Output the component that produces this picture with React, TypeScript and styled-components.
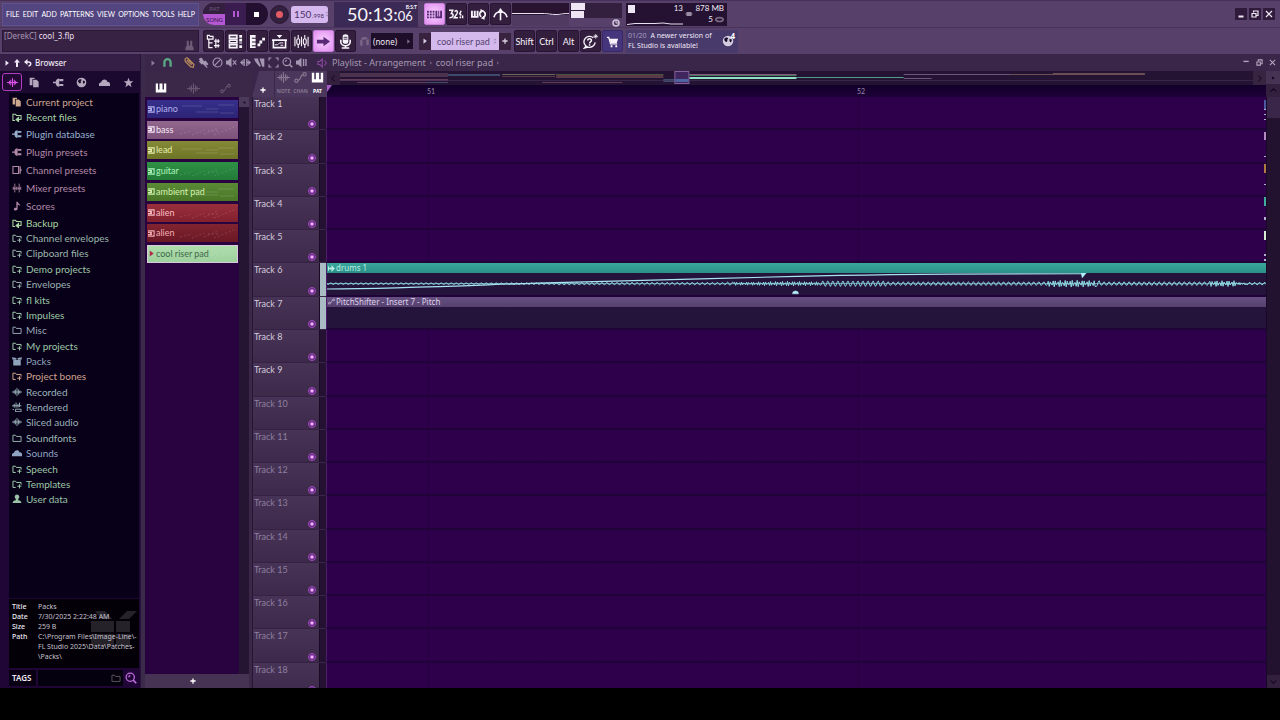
import React from "react";
import styled, { createGlobalStyle, css } from "styled-components";

const narrow = `Lato, "Noto Sans", sans-serif`;
const sans = `"Noto Sans", "Open Sans", sans-serif`;

const Global = createGlobalStyle`
  * { box-sizing: border-box; }
  html, body { margin: 0; background: #000; }
  body { font-family: ${sans}; font-size: 9px; color: #d9cfe2; overflow: hidden; }
  button, input, select { font: inherit; color: inherit; border: 0; padding: 0; margin: 0; background: none; appearance: none; outline: 0; }
  svg { display: block; flex: none; }
  h1, h2, p, dl, dd, dt, ul { margin: 0; padding: 0; font-weight: 400; }
`;

/* ---------- icons ---------- */

const s = { fill: "none", stroke: "currentColor" } as const;
const f = { fill: "currentColor" } as const;

const glyphs: Record<string, React.ReactNode> = {
  tree: (
    <g {...s} strokeWidth="1.300">
      <path d="M1.500 1.500h2l1 1h3v3h-6z M3 6v8.500h4 M3 9.500h4 M10.500 5v6 M8.500 7.500h6 M10.500 11v4 M8.500 12.500h6" />
      <path d="M13 5.500v4 M13 11v3.500" />
    </g>
  ),
  rack: (
    <g {...s}>
      <path d="M1.500 1.500h8v3h-8z M1.500 6.500h8v3h-8z M1.500 11.500h8v3h-8z" strokeWidth="1.700" />
      <path d="M13.500 1v9 M13.500 12v3" strokeWidth="3" strokeDasharray="3 1" />
    </g>
  ),
  roll: (
    <g {...f}>
      <path d="M0 1h6v3H2v1h4v3H2v1h4v3H2v1h4v2H0z M8 10h3v3H8z M10 7h3v3h-3z M13 4h3v3h-3z" />
    </g>
  ),
  playlist: (
    <g {...s}>
      <path d="M1.500 6.500h13v8h-13z M0 6.500h16" strokeWidth="1.700" />
      <path d="M3 11.500h3l2-2h4 M9 12h3" />
      <path d="M5 1h6l-3 3.500z" fill="currentColor" stroke="none" />
    </g>
  ),
  mixer: (
    <g {...s} strokeWidth="1.200">
      <path d="M4.500 1v4 M4.500 11v4 M11.500 1v4 M11.500 11v4" />
      <path d="M3 6.500a1.500 1.500 0 0 1 3 0v3a1.500 1.500 0 0 1-3 0z M10 6.500a1.500 1.500 0 0 1 3 0v3a1.500 1.500 0 0 1-3 0z M1 3v10 M8 3v10 M15 3v10" />
    </g>
  ),
  faders: (
    <g {...s} strokeWidth="1.400">
      <path d="M4.500 1v14 M11.500 1v14 M2 6v5 M7 6v5 M9.500 6v5 M14 6v5 M2 8.500h5 M9.500 8.500h4.500" />
    </g>
  ),
  arrow: <path {...f} d="M1 6h7V3l7 5-7 5v-3H1z" />,
  mic: (
    <g>
      <path {...f} d="M5 2a3 1.800 0 0 1 6 0v6a3 2.500 0 0 1-6 0z" />
      <path {...s} d="M3 6v2.500a5 4 0 0 0 10 0V6 M8 12.500V15 M4 15h8" strokeWidth="1.700" />
      <path stroke="#3a2548" d="M6 3.500h4 M6 5.500h4" />
    </g>
  ),
  magnet: <path {...s} strokeWidth="3.400" d="M3.500 14V7.500a4.500 4.500 0 0 1 9 0V14" />,
  magnetDots: <path {...s} strokeWidth="3.400" strokeDasharray="8 1" d="M3.500 14V7.500a4.500 4.500 0 0 1 9 0V14" />,
  typing: (
    <g {...f}>
      <path d="M0 4h2v2H0z M3 4h2v2H3z M6 4h2v2H6z M0 7h2v2H0z M3 7h2v2H3z M6 7h2v2H6z M0 10h2v2H0z M3 10h2v2H3z M6 10h2v2H6z M9 4h2v6h1V4h1v6h1V4h2v8H9z" />
    </g>
  ),
  count: (
    <g {...s} strokeWidth="1.600">
      <path d="M0 3.500h4L2.500 7c3 0 2.500 4.500-2 4.500 M6 5c1.500-2.500 4-.5 2.500 2L5.500 11.500h4 M13 4l-1.500 3 1.500 2 M12 10v2 M14.500 9v3" />
    </g>
  ),
  loop: (
    <g {...s} strokeWidth="2">
      <path d="M1 4v6.500h6V4 M4 4v6" />
      <path d="M11 4.500a3.500 3.500 0 0 0 0 6 M13 11a3.500 3.500 0 0 0 0-6.500" strokeWidth="1.800" />
      <path d="M10 2l4 2-3.500 2.500z M14.500 9v4.500L10.500 12z" fill="currentColor" stroke="none" />
    </g>
  ),
  scatter: (
    <g {...s} strokeWidth="1.700">
      <path d="M8 3v11 M1 11c1-4 4-6 7-6s6 2 7 6" />
      <path d="M8 1l3.500 5h-7z" fill="currentColor" stroke="none" />
    </g>
  ),
  help: (
    <g {...s} strokeWidth="1.400">
      <path d="M11 4A6 5.800 0 1 0 13 9 M3.500 12.500L1.500 15l4-1" />
      <path d="M5 7c0-2.500 4-2.500 4 0 0 1.500-2 1.500-2 3 M7 11v1.500" strokeWidth="1.600" />
      <path d="M13.500 0v5 M11 2.500h5 M12 1l3 3 M15 1l-3 3" strokeWidth=".8" />
    </g>
  ),
  cart: (
    <g>
      <path {...s} strokeWidth="1.400" d="M2 3.500h2l2 7h7" />
      <path {...f} d="M5 5h9l-1.500 4.500H6z M6 12h2v2H6z M11 12h2v2h-2z" />
    </g>
  ),
  globe: (
    <g>
      <circle cx="8" cy="8" r="7" fill="currentColor" />
      <path fill="#1a0c2b" d="M3 5c2-2 4-2 5-1s-2 2-1 3-1 3-2 2-2-1-2-4z M10 5l3 1v2l-2 2-1-2z" />
    </g>
  ),
  wave: <path {...s} strokeWidth="1.400" d="M0 8h16 M3.500 5.500v5 M5.500 4v8 M8 1.500v13 M10.500 4v8 M12.500 5.500v5" />,
  docs: (
    <g {...f}>
      <path d="M1 1h7v2H5v9H1z" />
      <path d="M6 4h5l3 3v8H6z" />
    </g>
  ),
  plug: (
    <g {...f}>
      <path d="M0 7h4c0-3 2-5 5-5v12c-3 0-5-2-5-5H0z" />
      <path d="M9 3h6v3H9z M9 10h6v3H9z" />
    </g>
  ),
  cloud: <path {...f} d="M0 13c-1-3 1-5 3-5 1-5 8-6 9-1 3-1 5 3 4 6z" />,
  star: <path {...f} d="M8 1l2 5h5l-4 3.500 1.500 5.500L8 11.500 3.500 15 5 9.500 1 6h5z" />,
  folder: <path {...s} strokeWidth="1.500" d="M1.500 3.500h4l1.500 2h7.500v8h-13z" />,
  folderMark: (
    <g {...s} strokeWidth="1.600">
      <path d="M6 13.500H1.500v-10h4l1.500 2h7.500V9" />
      <path d="M8.500 11.500H15 M12 8.500V15" />
    </g>
  ),
  folderBack: (
    <g {...s} strokeWidth="1.700">
      <path d="M5 13.500H1.500v-10h4l1.500 2h7.500V12H9" />
      <path d="M10.500 8.500v7L6.500 12z" fill="currentColor" />
    </g>
  ),
  channel: (
    <g>
      <path {...s} strokeWidth="1.700" d="M1.500 2.500h9v11h-9z" />
      <path {...f} d="M12 2h2v4l2 2-2 2v4h-2z" />
    </g>
  ),
  note: <path {...f} d="M7 1h2c0 3 5 3 4 7-1-2-3-2-4-2v6c0 4-6 4-6 1 0-2 2-3 4-2z" />,
  box: <path {...f} d="M0 2l7 1v3H1z M16 2L9 3v3h6z M2 6.500h12V15H2z" />,
  rendered: (
    <g {...s} strokeWidth="1.500">
      <path d="M0 6h15 M3.500 3v6 M6.500 1v8 M9.500 3v6 M12 1v7 M5.500 11.500h9v4h-9z M1 12h2" />
    </g>
  ),
  user: <path {...f} d="M8 1a3.500 3.500 0 0 1 2 6.500V10c3 0 5 2 5 4.500H1C1 12 3 10 6 10V7.500A3.500 3.500 0 0 1 8 1z" />,
  piano: <path {...f} d="M1 2h3v8h2V2h4v8h2V2h3v12H1z" />,
  env: (
    <g {...s} strokeWidth="1.500">
      <circle cx="3" cy="12" r="2" />
      <circle cx="13" cy="4" r="2" />
      <path d="M5 11.500c4 0 2-6 6-7" />
    </g>
  ),
  pencil: (
    <g {...s} strokeWidth="1.800">
      <path d="M1.500 4c0-3 3-3.500 5-1l8 8-1 4-4-1-7-7c-1-1-1-2-1-3z M4 4.500l7 7 M5.500 3l7 7" />
    </g>
  ),
  brush: <path {...f} d="M2 2c3-2 5 0 5 2l2 2 2-1 4 5-1 2-3-1 3 4-1 1-6-6-2 1-4-5 2-1-2-2z" />,
  ban: (
    <g {...s} strokeWidth="1.700">
      <circle cx="8" cy="8" r="6.500" />
      <path d="M3.500 12.500l9-9" />
    </g>
  ),
  mute: (
    <g>
      <path {...f} d="M0 5h3l5-4v14l-5-4H0z" />
      <path {...s} strokeWidth="1.600" d="M10 5l5 6 M15 5l-5 6" />
    </g>
  ),
  slip: (
    <g {...f}>
      <path d="M0 8l4-4v3h1V3h2v10H5V9H4v3z M16 8l-4-4v3h-1V3H9v10h2V9h1v3z" />
    </g>
  ),
  slice: <path {...f} d="M0 2h6v2l4 9-2 1-6-7z M8 2h7v12h-3z" />,
  select: <path {...s} strokeWidth="1.700" d="M1.500 5V1.500H5 M11 1.500h3.500V5 M14.500 11v3.500H11 M5 14.500H1.500V11" />,
  zoom: (
    <g {...s} strokeWidth="1.700">
      <circle cx="7" cy="7" r="5.500" />
      <path d="M5 7a2 2 0 0 1 2-2" />
      <path d="M11 11l4 4" strokeWidth="2.300" />
    </g>
  ),
  speaker: (
    <g>
      <path {...f} d="M0 5h3l5-4v14l-5-4H0z" />
      <path {...s} strokeWidth="2" d="M11 3v10 M14.500 3v10" />
    </g>
  ),
  monitor: (
    <g {...s} strokeWidth="1.700">
      <path d="M1.500 5.500h3l4-4v13l-4-4h-3z" />
      <path d="M12 4l3 4-3 4" />
    </g>
  ),
  right: <path {...f} d="M4 1l9 7-9 7z" />,
  up: <path {...f} d="M8 0l6 7h-4v9H6V7H2z" />,
  undo: (
    <g>
      <path {...f} d="M0 6l7-6v12z" />
      <path {...s} strokeWidth="3" d="M6 6h3c6 0 6 7 0 8" />
    </g>
  ),
  plus: <path {...s} strokeWidth="3.500" d="M8 1v14 M1 8h14" />,
  min: <path {...f} d="M3 11h10v4H3z" />,
  restore: (
    <g {...s} strokeWidth="2.400">
      <path d="M2 7h8v7H2z M5 5V2h9v9h-3" />
    </g>
  ),
  close: <path {...s} strokeWidth="2.400" d="M2 2l12 12 M14 2L2 14" />,
  minThin: <path {...f} d="M1 4h12v3H1z" />,
  chevL: <path {...s} strokeWidth="1.800" d="M10 3L5 8l5 5" />,
  chevR: <path {...s} strokeWidth="1.800" d="M6 3l5 5-5 5" />,
  chevU: <path {...s} strokeWidth="1.800" d="M3 10l5-5 5 5" />,
  chevD: <path {...s} strokeWidth="1.800" d="M3 6l5 5 5-5" />,
  dot: <path {...f} d="M5 5h6v6H5z" />,
  clip: (
    <g>
      <path {...s} strokeWidth="2.400" d="M0 2h14v12H0" />
      <path {...f} d="M0 4h9v3H0z M0 9h9v3H0z M5 7h4v2H5z" />
    </g>
  ),
  clock: (
    <g>
      <circle cx="8" cy="8" r="6" {...s} strokeWidth="3" />
      <path {...s} strokeWidth="2" d="M8 3v5h5" />
    </g>
  ),
  ellipse: <ellipse cx="8" cy="8" rx="6.500" ry="3.500" {...s} strokeWidth="3" />,
  chip: <path {...f} d="M3 4h10v8H3z M1 6h14v1H1z M1 9h14v1H1z" />,
  stamp: <path {...f} d="M4 1h3v7h2V1h3v8h1l1 3v3H2v-3l1-3h1z" />,
  clipWave: <path {...s} strokeWidth="2.400" d="M1 3v10 M1 8h14 M5 5v6 M9 3v10l5-5z" />,
  spin: <path {...f} d="M8 1l4 5H4z M8 15l4-5H4z" />,
};

const Icon = ({ name, size = 12, color }: { name: string; size?: number; color?: string }) => (
  <svg width={size} height={size} viewBox="0 0 16 16" color={color} aria-hidden="true">
    {glyphs[name]}
  </svg>
);

/* ---------- frame ---------- */

const Frame = styled.div`
  display: flex;
  flex-direction: column;
  height: 100vh;
  padding-bottom: 32px;
`;
const Header = styled.header`
  flex: none;
  background: #57416a;
  border-top: 1px solid #45305a;
`;
const Bar = styled.div`
  display: flex;
  align-items: center;
  height: 27px;
  padding: 0 5px 0 2px;
  border-bottom: 1px solid #48335a;
  &:last-child { height: 26px; border-bottom: 0; }
`;
const Menu = styled.nav`
  display: flex;
  justify-content: space-between;
  align-items: center;
  width: 197px;
  height: 23px;
  padding: 0 3px;
  margin-right: 4px;
  background: #534580;
  border: 1px solid #5f5090;
  font: 7px ${narrow};
  color: #fff;
`;
const Hint = styled.div`
  display: flex;
  justify-content: space-between;
  align-items: flex-start;
  width: 197px;
  height: 22px;
  padding: 0 3px 0 1px;
  margin-right: 4px;
  background: #382243;
  border: 1px solid #2b1836;
  font-size: 8px;
  line-height: 10px;
  color: #e8dff0;
  span { color: #a596b2; }
  svg { align-self: flex-end; }
`;
const Transport = styled.div`
  display: flex;
  align-items: center;
  width: 65px;
  height: 22px;
  overflow: hidden;
  border-radius: 11px;
  background: #251231;
`;
const Mode = styled.div`
  width: 22px;
  flex: none;
  display: flex;
  flex-direction: column;
  align-self: stretch;
`;
const ModeButton = styled.button<{ $on?: boolean }>`
  flex: 1;
  padding-left: 1px;
  font: 6px/10px ${narrow};
  color: ${(p) => (p.$on ? "#2c1040" : "#6a557b")};
  background: ${(p) => (p.$on ? "#b558d4" : "#33203f")};
`;
const TransportButton = styled.button<{ $lit?: boolean }>`
  display: grid;
  place-items: center;
  width: 21px;
  height: 22px;
  background: ${(p) => (p.$lit ? "#3b1c50" : "#231030")};
`;
const Record = styled.button`
  display: grid;
  place-items: center;
  width: 19px;
  height: 19px;
  margin: 0 2px;
  border-radius: 50%;
  background: #33203f;
  border: 1px solid #2a1636;
`;
const Tempo = styled.label`
  display: flex;
  align-items: center;
  width: 37px;
  height: 17px;
  padding: 0 1px 0 3px;
  border-radius: 3px;
  background: #d5b8ee;
  color: #4b3168;
  font: 10px ${narrow};
  input { width: 18px; }
  small { flex: 1; font-size: 6px; padding-top: 3px; }
`;
const Clock = styled.div`
  position: relative;
  display: flex;
  align-items: baseline;
  width: 84px;
  height: 25px;
  padding-left: 13px;
  margin: 0 6px;
  background: #3b2a55;
  color: #f8f5fc;
  font: 18px/24px ${narrow};
  span { font-size: 13px; }
  small { position: absolute; right: 1px; top: 1px; font: 700 5px/8px ${narrow}; }
`;
const Tool = styled.button<{ $on?: boolean; $shop?: boolean }>`
  display: grid;
  place-items: center;
  flex: none;
  width: 21px;
  height: 22px;
  margin-right: 1px;
  color: #f8f4fb;
  background: ${(p) => (p.$shop ? "#44357c" : "#341e3e")};
  border: 1px solid ${(p) => (p.$shop ? "#372968" : "#281432")};
  border-radius: 2px;
  font: 9px ${narrow};
  ${(p) => p.$on && css`
    background: radial-gradient(#fad4ff, #e08df0);
    border-color: #c880dc;
    color: #5a2a78;
  `}
`;
const Scope = styled.div`
  width: 57px;
  height: 23px;
  background: #281431;
  margin-right: 1px;
`;
const Meter = styled.div`
  position: relative;
  width: 52px;
  height: 23px;
  margin-right: 4px;
  background: linear-gradient(#33203f 0 15px, #57416a 15px);
  svg { position: absolute; right: 2px; bottom: -1px; }
`;
const MeterBar = styled.div<{ $w: number }>`
  width: ${(p) => p.$w}px;
  height: 7px;
  margin: 0 0 1px 1px;
  background: #eee6f2;
`;
const System = styled.div`
  display: grid;
  grid-template-columns: 56px 10px 1fr;
  width: 101px;
  height: 23px;
  padding: 0 3px 0 1px;
  background: #251131;
  color: #f2ecf7;
  font: 8px/11px ${narrow};
  white-space: nowrap;
  > div { display: flex; flex-direction: column; align-items: flex-end; }
  p { display: flex; align-items: center; gap: 2px; }
`;
const Load = styled.div`
  svg { margin-top: 8px; }
  &::before { content: ""; align-self: flex-start; width: 7px; height: 8px; margin: 2px 0 -10px 1px; background: #eee6f2; }
`;
const Spacer = styled.div`flex: 1;`;
const WindowButtons = styled.div<{ $flat?: boolean }>`
  display: flex;
  gap: ${(p) => (p.$flat ? 5 : 2)}px;
  button {
    display: grid;
    place-items: center;
    width: ${(p) => (p.$flat ? 8 : 12)}px;
    height: 12px;
    color: ${(p) => (p.$flat ? "#b5a6c0" : "#f0e8f5")};
    background: ${(p) => (p.$flat ? "none" : "#301b3c")};
  }
`;
const Snap = styled.label`
  display: flex;
  align-items: center;
  gap: 1px;
  margin: 0 6px 0 2px;
  color: #7b6889;
`;
const SnapBox = styled.span`
  display: flex;
  align-items: center;
  width: 42px;
  height: 16px;
  padding: 0 2px 0 2px;
  background: #1f0e2a;
  color: #f0e8f5;
  select { flex: 1; min-width: 0; font-size: 8px; }
`;
const Pattern = styled.div`
  display: flex;
  align-items: center;
  height: 18px;
  margin-right: 3px;
  > button { display: grid; place-items: center; width: 12px; height: 17px; background: #38223f; }
  label {
    display: flex;
    align-items: center;
    width: 68px;
    height: 18px;
    padding: 0 1px 0 6px;
    background: #d3b9ec;
    color: #54406c;
    font: 9px ${narrow};
  }
  select { flex: 1; min-width: 0; height: 18px; }
`;
const News = styled.a`
  display: flex;
  align-items: center;
  justify-content: space-between;
  width: 112px;
  height: 23px;
  margin-left: 2px;
  padding: 0 4px 0 2px;
  background: #493a6c;
  color: #efe8f6;
  text-decoration: none;
  font-size: 7px;
  line-height: 10px;
  white-space: nowrap;
  span { color: #ab9dbd; margin-right: 2px; }
`;
const Badge = styled.span`
  position: relative;
  display: block;
  && { margin: 0; color: #d5cce0; }
  b { position: absolute; right: -1px; top: -4px; font-size: 8px; line-height: 10px; color: #fff; }
`;

/* ---------- browser ---------- */

const Work = styled.main`
  display: flex;
  flex: 1;
  min-height: 0;
  background: #3b2849;
`;
const Browser = styled.aside`
  display: flex;
  flex-direction: column;
  width: 140px;
  flex: none;
  background: #200636;
`;
const BrowserTitle = styled.h2`
  display: flex;
  align-items: center;
  gap: 3px;
  height: 17px;
  padding-left: 4px;
  background: #351f47;
  color: #f0e8f5;
  font-size: 8px;
  font-weight: 500;
`;
const BrowserTabs = styled.div`
  display: flex;
  height: 22px;
  background: #1b0930;
`;
const BrowserTab = styled.button<{ $on?: boolean }>`
  display: grid;
  place-items: center;
  flex: 1;
  color: ${(p) => (p.$on ? "#e052ee" : "#b5a8be")};
  ${(p) => p.$on && css`
    flex: 0 0 20px;
    margin: 2px 1px 2px 2px;
    border: 1px solid #b23cc0;
    border-radius: 3px;
    background: #230a35;
  `}
`;
const Tree = styled.ul`
  flex: 1;
  min-height: 0;
  margin: 0 1px 0 9px;
  padding-top: 1px;
  list-style: none;
  background: #080019;
`;
const Group = styled.div<{ $h: number }>`
  display: grid;
  grid-auto-rows: 1fr;
  height: ${(p) => p.$h}px;
`;
const Entry = styled.li<{ $c: string }>`
  display: flex;
  align-items: center;
  gap: 4px;
  padding-left: 3px;
  color: ${(p) => p.$c};
  font: 10px/14px ${narrow};
`;
const Info = styled.div`
  position: relative;
  height: 69px;
  margin: 1px 1px 0 9px;
  padding: 3px 2px 0 3px;
  background: #030008;
  font-size: 7px;
  line-height: 10px;
  color: #c6c1cc;
  > svg { position: absolute; right: 2px; top: 12px; }
  dl { position: relative; display: grid; grid-template-columns: 26px 1fr; }
  dt { color: #f0edf4; font-weight: 500; }
  dd { white-space: nowrap; }
`;
const Tags = styled.label`
  display: flex;
  align-items: center;
  height: 18px;
  margin: 1px 1px 1px 9px;
  color: #f0eaf4;
  font-size: 8px;
  font-weight: 600;
  > span { flex: none; width: 27px; margin-right: 2px; padding-left: 3px; line-height: 16px; background: #080012; }
  > div { display: flex; align-items: center; flex: 1; min-width: 0; height: 16px; padding-right: 2px; background: #05000d; color: #5c5560; }
  input { flex: 1; width: 0; min-width: 0; }
  > svg { margin: 0 2px; }
`;

/* ---------- playlist ---------- */

const Splitter = styled.div`
  width: 5px;
  background: #3c2a4b;
  border-left: 1px solid #281439;
`;
const Playlist = styled.section`
  display: flex;
  flex-direction: column;
  flex: 1;
  min-width: 0;
`;
const PlaylistTitle = styled.div`
  display: flex;
  align-items: center;
  height: 17px;
  padding: 0 4px 0 5px;
  color: #a596b2;
  font-size: 9px;
  background: #392648;
`;
const Tools = styled.div`
  display: grid;
  grid-template-columns: 12px 22px repeat(9, 14px);
  align-items: center;
  button { display: grid; place-items: center; justify-self: start; }
`;
const Crumbs = styled.h1`
  display: flex;
  align-items: center;
  gap: 3px;
  padding-left: 7px;
  font-size: 9px;
  color: #a799b3;
  > svg:first-child { margin-right: 2px; }
`;
const PlaylistBody = styled.div`
  display: flex;
  flex: 1;
  min-height: 0;
`;
const Picker = styled.div`
  display: flex;
  flex-direction: column;
  width: 104px;
  flex: none;
`;
const PickerTabs = styled.div`
  display: grid;
  grid-template-columns: repeat(3, 32px);
  align-items: center;
  height: 26px;
  padding-top: 8px;
  button { display: grid; place-items: center; color: #67556f; }
  button:first-child { color: #fff; }
`;
const PickerMain = styled.div`
  display: flex;
  flex: 1;
  min-height: 0;
  background: #290340;
`;
const PickerList = styled.div`
  display: flex;
  flex-direction: column;
  justify-content: space-between;
  flex: 1;
  height: 166px;
  padding: 3px 1px 0 2px;
`;
const PatternItem = styled.button<{ $bg: string; $fg: string; $on?: boolean }>`
  position: relative;
  display: flex;
  align-items: center;
  height: 18px;
  padding-left: 1px;
  gap: 1px;
  background: linear-gradient(${(p) => p.$bg});
  color: ${(p) => p.$fg};
  font: 9px/16px ${narrow};
  span { z-index: 1; }
  > svg:last-child { position: absolute; right: 2px; top: 3px; }
  ${(p) => p.$on && css`outline: 1px solid #d8c8dc; outline-offset: -1px;`}
`;
const PickerScroll = styled.div`
  width: 10px;
  background: #261433;
  button { width: 10px; height: 10px; background: #4b3a59; display: grid; place-items: center; color: #1c0c26; }
`;
const PickerAdd = styled.button`
  display: grid;
  place-items: center;
  height: 14px;
  padding-right: 8px;
  background: #463354;
  color: #fff;
`;
const Arrange = styled.div`
  display: flex;
  flex-direction: column;
  flex: 1;
  min-width: 0;
  margin-left: 3px;
  background: #392648;
`;
const ArrangeTop = styled.div`
  display: flex;
  height: 26px;
  flex: none;
`;
const Corner = styled.div`
  display: flex;
  width: 75px;
  background: #4a375b;
  clip-path: polygon(7px 0, 100% 0, 100% 100%, 0 100%);
  > button { display: grid; place-items: end center; width: 22px; padding-bottom: 4px; color: #fff; }
`;
const FilterTabs = styled.div`
  display: grid;
  grid-template-columns: repeat(3, 17px);
  border-left: 1px solid #392648;
  button {
    display: flex;
    flex-direction: column;
    align-items: center;
    gap: 3px;
    font: 700 5px/8px "Noto Sans", sans-serif;
    color: #85758f;
  }
  button:last-child { color: #fff; }
`;
const Timeline = styled.div`
  flex: 1;
  min-width: 0;
`;
const Overview = styled.div`
  display: flex;
  height: 14px;
  background: #251333;
  > button { display: grid; place-items: center; width: 13px; background: #33203f; color: #1a0a26; }
  > svg { flex: 1; min-width: 0; }
  > button:last-child { background: #362441; }
`;
const Ruler = styled.div`
  display: grid;
  grid-template-columns: 100px 430px 1fr;
  height: 12px;
  background: linear-gradient(#12002a, #1d0039);
  color: #9a8aaa;
  font: 7px/13px ${narrow};
  &::before {
    content: "";
    width: 5px;
    height: 7px;
    background: #a65cc4;
    clip-path: polygon(0 0, 100% 0, 0 100%);
  }
`;
const ScrollTop = styled.div`
  width: 14px;
  button { display: grid; place-items: center; width: 14px; height: 13px; color: #160822; background: #463354; }
  button + button { background: #33203f; color: #120520; }
`;
const ArrangeMain = styled.div`
  display: flex;
  flex: 1;
  min-height: 0;
`;
const TrackView = styled.div`
  flex: 1;
  min-width: 0;
  overflow: hidden;
`;
const TrackList = styled.div`
  display: grid;
  grid-template-rows: repeat(18, 1fr);
  height: calc(100% + 8px);
`;
const Track = styled.div`
  display: flex;
  min-height: 0;
`;
const TrackHead = styled.div<{ $dim?: boolean }>`
  position: relative;
  width: 67px;
  padding: 1px 0 0 1px;
  background: linear-gradient(#463355, #3d2a4b);
  border-bottom: 1px solid #342143;
  border-left: 1px solid #261433;
  color: ${(p) => (p.$dim ? "#8f7fa0" : "#d6cbdd")};
  font: 9px/11px ${narrow};
`;
const Led = styled.input`
  && {
    position: absolute;
    right: 3px;
    bottom: 1px;
    width: 8px;
    height: 8px;
    border: 1px solid #a64cc4;
    border-radius: 50%;
    background: radial-gradient(#eeb4fc 0 1px, #8a3ca8 2px, #3d1a50 3px);
  }
`;
const Activity = styled.div<{ $on?: boolean }>`
  width: 7px;
  margin-bottom: 1px;
  border-left: 1px solid #180a25;
  background: ${(p) => (p.$on ? "#a9bcc4" : "#251233")};
`;
const Lane = styled.div`
  flex: 1;
  min-width: 0;
  display: flex;
  flex-direction: column;
  border-left: 1px solid #4c1d68;
  border-bottom: 2px solid #200339;
  background:
    linear-gradient(90deg, transparent 101px, #25003f 101px 102px, transparent 102px 531px, #25003f 531px 532px, transparent 532px),
    repeating-linear-gradient(90deg, #2e004b 0 53px, #2b0047 53px 54px);
`;
const Clip = styled.div<{ $head: string; $fg: string }>`
  display: flex;
  flex-direction: column;
  flex: 1;
  min-height: 0;
  background: #24133a;
  h2 {
    display: flex;
    align-items: center;
    gap: 1px;
    height: 10px;
    flex: none;
    padding-left: 1px;
    background: ${(p) => p.$head};
    color: ${(p) => p.$fg};
    font: 8px/10px "Noto Sans", sans-serif;
  }
  > svg { flex: 1; width: 100%; min-height: 0; }
`;
const Scroll = styled.div`
  width: 14px;
  display: flex;
  flex-direction: column;
  justify-content: space-between;
  background: #23122f;
  border-left: 1px solid #190827;
  color: #160822;
  &::before { content: ""; height: 21px; background: #392648; }
  button { display: grid; place-items: center; height: 13px; background: #33203f; }
`;
const Peaks = styled.div`
  width: 2px;
  margin-left: -2px;
  position: relative;
`;

/* ---------- data ---------- */

type Row = [string, string, string];
const topRows: Row[] = [
  ["docs", "Current project", "#cda690"],
  ["folderBack", "Recent files", "#a6d2a4"],
];
const presetRows: Row[] = [
  ["plug", "Plugin database", "#96b0ce"],
  ["plug", "Plugin presets", "#b289a6"],
  ["channel", "Channel presets", "#b289a6"],
  ["faders", "Mixer presets", "#b289a6"],
  ["note", "Scores", "#b289a6"],
];
const folderRows: Row[] = [
  ["folderBack", "Backup", "#a8d8a0"],
  ["folderMark", "Channel envelopes", "#9ab8aa"],
  ["folderMark", "Clipboard files", "#9ab8aa"],
  ["folderMark", "Demo projects", "#9cc8a6"],
  ["folderMark", "Envelopes", "#9ab2b0"],
  ["folderMark", "fl kits", "#9cc8a6"],
  ["folderMark", "Impulses", "#9cc8a6"],
  ["folder", "Misc", "#9aaab8"],
  ["folderMark", "My projects", "#9cc8a6"],
  ["box", "Packs", "#8fa3ba"],
  ["folderMark", "Project bones", "#d0a48e"],
  ["wave", "Recorded", "#9ab2b8"],
  ["rendered", "Rendered", "#9ab2b8"],
  ["wave", "Sliced audio", "#9ab2b8"],
  ["folder", "Soundfonts", "#9abab0"],
  ["cloud", "Sounds", "#8fa3c2"],
  ["folderMark", "Speech", "#9cc8a6"],
  ["folderMark", "Templates", "#9cc8a6"],
  ["user", "User data", "#9ac2a6"],
];
const patterns = [
  { name: "piano", bg: "#36308c, #2c2476", fg: "#b4b0ee" },
  { name: "bass", bg: "#93688f, #7d527a", fg: "#f8e8f6" },
  { name: "lead", bg: "#848a36, #6d7426", fg: "#e8eeac" },
  { name: "guitar", bg: "#2f9146, #217a37", fg: "#aef2bc" },
  { name: "ambient pad", bg: "#5a8a36, #497726", fg: "#d4f0b0" },
  { name: "alien", bg: "#9a2f3c, #82202e", fg: "#f8bcc2" },
  { name: "alien", bg: "#802430, #6a1824", fg: "#f0acb2" },
  { name: "cool riser pad", bg: "#b0deae, #9cd09c", fg: "#3f6848", on: true },
];

const TreeRows = ({ rows }: { rows: Row[] }) => (
  <>
    {rows.map(([icon, label, color]) => (
      <Entry key={label} $c={color}>
        <Icon name={icon} size={10} />
        {label}
      </Entry>
    ))}
  </>
);

const loudness = (x: number) => {
  if (x < 230) return 0.8;
  if (x < 400) return 1.3;
  if (x < 430) return 1.7;
  if (x < 495) return 2.4 - Math.abs(x - 462) / 60;
  if (x < 560) return 2.8;
  if (x < 722) return 1.9;
  if (x < 775) return 3.6 - Math.abs(x - 745) / 50;
  if (x < 884) return 1.9;
  if (x < 912) return 3;
  return 1.3;
};
const wavePath = () => {
  let d = "M0 11";
  for (let x = 1; x <= 940; x += 1) {
    const dense = (x > 407 && x < 494) || (x > 722 && x < 770) || (x > 884 && x < 920);
    const phase = dense ? x * 2.6 : x * 1.25;
    d += `L${x} ${(11 + Math.sin(phase) * loudness(x)).toFixed(1)}`;
  }
  return d;
};

const DrumWave = () => (
  <svg viewBox="0 0 940 22" preserveAspectRatio="none" fill="none" stroke="#8fdbe6">
    <path d="M0 11H940" strokeWidth="1" opacity=".7" />
    <path d={wavePath()} strokeWidth="1" />
    <path d="M0 16.500C80 16 160 12 210 10.500S380 6 470 3.500S620 .8 757 .8" stroke="#a8e4f0" strokeWidth="1.200" />
    <path d="M755 0h5l-4 5z M466 21.500a3 3 0 0 1 6 0z" fill="#b4f0fa" stroke="#b4f0fa" strokeWidth=".5" />
  </svg>
);

const OverviewMap = () => (
  <svg viewBox="0 0 912 14" height="14" preserveAspectRatio="none">
    <path fill="#4b3350" d="M0 2h108v4H0z" />
    <path fill="#613b58" d="M0 8h108v2H0z M17 11h91v1H17z M202 11h80v1H202z" />
    <path fill="#3e4a6b" d="M108 3h52v2H108z M86 11h21v1H86z M323 8h13v3h-13z" />
    <path fill="#6b6a5a" d="M162 3h53v1h-53z" />
    <path fill="#5a3a48" d="M162 5h53v1h-53z M216 4h107v3H216z" />
    <path fill="#49543f" d="M216 3h107v1H216z" />
    <path fill="#48305a" d="M0 9h912v1H0z" opacity=".6" />
    <path fill="#8b5a7a" d="M349 3h107v1H349z" />
    <path fill="#3c7d64" d="M349 4h107v1H349z" />
    <path fill="#90e0c4" d="M349 6h107v2H349z" />
    <path fill="#4d9c8c" d="M456 6h107v1H456z" />
    <path fill="#6e5580" d="M563 3h107v1H563z M563 7h28v1h-28z" />
    <path fill="#8a6a62" d="M670 3h107v1H670z M712 2h92v2h-92z" opacity=".7" />
    <path fill="#40265c" stroke="#84609f" d="M334.500 .5h14v12h-14z" />
    <path fill="#4f64a0" d="M335 8h13v3h-13z" />
  </svg>
);

const PeakMarks = () => (
  <svg width="2" height="166" viewBox="0 0 2 166">
    <path fill="#4a5aa0" d="M0 3h2v10H0z" />
    <path fill="#b7b0d0" d="M0 12h2v1H0z M0 17h2v1H0z M0 22h2v1H0z M0 59h2v1H0z M0 87h2v1H0z M0 120h2v3H0z M0 157h2v2H0z M0 162h2v2H0z" />
    <path fill="#b48ac0" d="M0 35h2v8H0z" />
    <path fill="#b07a40" d="M0 67h2v9H0z" />
    <path fill="#3fae9c" d="M0 100h2v9H0z" />
    <path fill="#d6ecd0" d="M0 134h2v9H0z" />
  </svg>
);

const PatternDashes = ({ i }: { i: number }) => (
  <svg width="58" height="12" viewBox="0 0 58 12" fill="none" stroke="#fff" opacity=".14">
    {i % 4 === 0 || i === 2 ? (
      <path d={`M4 ${3 + (i % 3)}h20 M28 6h12 M18 9h22 M40 ${2 + (i % 3)}h16 M42 10h14`} />
    ) : (
      <path strokeDasharray="2 2" d="M2 10l12-3 M14 11l12-5 M26 10l14-6 M36 11l20-8 M30 7h12" />
    )}
  </svg>
);

const Tb = ({ icon, label, on, shop }: { icon: string; label: string; on?: boolean; shop?: boolean }) => (
  <Tool $on={on} $shop={shop} aria-label={label}>
    <Icon name={icon} size={15} />
  </Tool>
);

export default function App() {
  return (
    <Frame>
      <Global />
      <Header>
        <Bar>
          <Menu>
            {["FILE", "EDIT", "ADD", "PATTERNS", "VIEW", "OPTIONS", "TOOLS", "HELP"].map((m) => (
              <button key={m}>{m}</button>
            ))}
          </Menu>
          <Transport>
            <Mode>
              <ModeButton>PAT</ModeButton>
              <ModeButton $on>SONG</ModeButton>
            </Mode>
            <TransportButton $lit aria-label="Pause">
              <svg width="6" height="6" fill="#b558d4"><path d="M0 0h2v6H0z M4 0h2v6H4z" /></svg>
            </TransportButton>
            <TransportButton aria-label="Stop">
              <svg width="5" height="5" fill="#fff"><path d="M0 0h5v5H0z" /></svg>
            </TransportButton>
          </Transport>
          <Record aria-label="Record">
            <svg width="7" height="7"><circle cx="3.500" cy="3.500" r="3.500" fill="#e25a64" /></svg>
          </Record>
          <Tempo>
            <input aria-label="Tempo" defaultValue="150" />
            <small>.998</small>
            <Icon name="spin" size={6} color="#a58abb" />
          </Tempo>
          <Clock>
            50:13:<span>06</span>
            <small>B:S:T</small>
          </Clock>
          <Tb icon="typing" label="Typing keyboard" on />
          <Tb icon="count" label="Countdown" />
          <Tb icon="loop" label="Loop recording" />
          <Tb icon="scatter" label="Metronome" />
          <Scope>
            <svg width="57" height="23" fill="none" stroke="#e8dff0">
              <path d="M0 12h57v11H0z" fill="#503a62" stroke="none" />
              <path d="M0 10.500h30c8 0 8 1 14 1s4-1 13-1" />
            </svg>
          </Scope>
          <Meter>
            <MeterBar $w={14} />
            <MeterBar $w={13} />
            <Icon name="clock" size={8} color="#d0c4da" />
          </Meter>
          <System>
            <Load>
              <p>13</p>
              <svg width="56" height="3" stroke="#e8dff0" fill="none"><path d="M0 2.500l8-1h20l8-.5 8 1h12" /></svg>
            </Load>
            <div><Spacer /><Icon name="chip" size={8} color="#9a8ca5" /><Spacer /></div>
            <div>
              <p>878 MB</p>
              <p>5 <Icon name="ellipse" size={9} color="#7a6a86" /></p>
            </div>
          </System>
          <Spacer />
          <WindowButtons>
            <button aria-label="Minimize"><Icon name="min" size={8} /></button>
            <button aria-label="Restore"><Icon name="restore" size={8} /></button>
            <button aria-label="Close"><Icon name="close" size={8} /></button>
          </WindowButtons>
        </Bar>
        <Bar>
          <Hint>
            <p><span>[DerekC]</span> cool_3.flp</p>
            <Icon name="stamp" size={11} color="#6d5b78" />
          </Hint>
          <Tb icon="tree" label="Browser" />
          <Tb icon="rack" label="Channel rack" />
          <Tb icon="roll" label="Piano roll" />
          <Tb icon="playlist" label="Playlist" />
          <Tb icon="mixer" label="Mixer" />
          <Tb icon="arrow" label="Step edit" on />
          <Tb icon="mic" label="Recording" />
          <Snap>
            <Icon name="magnetDots" size={11} />
            <SnapBox>
              <select aria-label="Snap"><option>(none)</option></select>
              <Icon name="right" size={5} color="#7d6a8c" />
            </SnapBox>
          </Snap>
          <Pattern>
            <button aria-label="Previous pattern"><Icon name="right" size={6} /></button>
            <label>
              <select aria-label="Pattern"><option>cool riser pad</option></select>
              <Icon name="spin" size={6} color="#a58abb" />
            </label>
            <button aria-label="Add pattern"><Icon name="plus" size={6} /></button>
          </Pattern>
          <Tool>Shift</Tool>
          <Tool>Ctrl</Tool>
          <Tool>Alt</Tool>
          <Tb icon="help" label="Help" />
          <Tb icon="cart" label="Shop" shop />
          <News href="#news">
            <p><span>01/20</span> A newer version of<br />FL Studio is available!</p>
            <Badge><Icon name="globe" size={12} /><b>4</b></Badge>
          </News>
        </Bar>
      </Header>

      <Work>
        <Browser>
          <BrowserTitle>
            <Icon name="right" size={6} />
            <Icon name="up" size={8} />
            <Icon name="undo" size={8} />
            Browser
          </BrowserTitle>
          <BrowserTabs>
            {["wave", "docs", "plug", "globe", "cloud", "star"].map((n, i) => (
              <BrowserTab key={n} $on={i === 0} aria-label={n}><Icon name={n} size={11} /></BrowserTab>
            ))}
          </BrowserTabs>
          <Tree>
            <Group $h={31}><TreeRows rows={topRows} /></Group>
            <Group $h={90}><TreeRows rows={presetRows} /></Group>
            <Group $h={292}><TreeRows rows={folderRows} /></Group>
          </Tree>
          <Info>
            <svg width="46" height="36" viewBox="0 0 46 36" fill="#25222a">
              <path d="M0 10h23v11H0z M25 10h14v11H25z M0 23h23v12H0z M25 23h14v12H25z M28 8l8-8h10l-8 8z M4 0h10l7 8H10z" />
            </svg>
            <dl>
              <dt>Title</dt><dd>Packs</dd>
              <dt>Date</dt><dd>7/30/2025 2:22:48 AM</dd>
              <dt>Size</dt><dd>259 B</dd>
              <dt>Path</dt><dd>C:\Program Files\Image-Line\-<br />FL Studio 2025\Data\Patches-<br />\Packs\</dd>
            </dl>
          </Info>
          <Tags>
            <span>TAGS</span>
            <div>
              <input aria-label="Tags" />
              <Icon name="folder" size={10} />
            </div>
            <Icon name="zoom" size={12} color="#c46ce0" />
          </Tags>
        </Browser>
        <Splitter />
        <Playlist>
          <PlaylistTitle>
            <Tools>
              <button aria-label="Playlist menu"><Icon name="right" size={6} color="#8d7d9a" /></button>
              <button aria-label="Magnet"><Icon name="magnet" size={11} color="#5aa884" /></button>
              <button aria-label="Draw"><Icon name="pencil" size={11} color="#b88a5c" /></button>
              {["brush", "ban", "mute", "slip", "slice", "select", "zoom", "speaker"].map((n) => (
                <button key={n} aria-label={n}><Icon name={n} size={11} /></button>
              ))}
            </Tools>
            <Crumbs>
              <Icon name="monitor" size={10} color="#8a479f" />
              <span>Playlist - Arrangement</span>
              <Icon name="right" size={4} color="#6c5a7a" />
              <span>cool riser pad</span>
              <Icon name="right" size={4} color="#6c5a7a" />
            </Crumbs>
            <Spacer />
            <WindowButtons $flat>
              <button aria-label="Minimize playlist"><Icon name="minThin" size={7} /></button>
              <button aria-label="Restore playlist"><Icon name="restore" size={7} /></button>
              <button aria-label="Close playlist"><Icon name="close" size={7} /></button>
            </WindowButtons>
          </PlaylistTitle>
          <PlaylistBody>
            <Picker>
              <PickerTabs>
                <button aria-label="Patterns"><Icon name="piano" size={12} /></button>
                <button aria-label="Audio"><Icon name="wave" size={13} /></button>
                <button aria-label="Automation"><Icon name="env" size={11} /></button>
              </PickerTabs>
              <PickerMain>
                <PickerList>
                  {patterns.map((p, i) => (
                    <PatternItem key={i} $bg={p.bg} $fg={p.fg} $on={p.on}>
                      <Icon name={p.on ? "right" : "clip"} size={7} color={p.on ? "#b02c48" : undefined} />
                      <span>{p.name}</span>
                      <PatternDashes i={i} />
                    </PatternItem>
                  ))}
                </PickerList>
                <PickerScroll><button aria-label="Scroll up"><Icon name="dot" size={5} /></button></PickerScroll>
              </PickerMain>
              <PickerAdd aria-label="Add clip"><Icon name="plus" size={6} /></PickerAdd>
            </Picker>
            <Arrange>
              <ArrangeTop>
                <Corner>
                  <button aria-label="Add track"><Icon name="plus" size={6} /></button>
                  <FilterTabs>
                    <button><Icon name="wave" size={13} />NOTE</button>
                    <button><Icon name="env" size={13} />CHAN</button>
                    <button><Icon name="piano" size={13} />PAT</button>
                  </FilterTabs>
                </Corner>
                <Timeline>
                  <Overview>
                    <button aria-label="Scroll left"><Icon name="chevL" size={9} /></button>
                    <OverviewMap />
                    <button aria-label="Scroll right"><Icon name="chevR" size={9} /></button>
                  </Overview>
                  <Ruler><span>51</span><span>52</span></Ruler>
                </Timeline>
                <ScrollTop>
                  <button aria-label="Zoom"><Icon name="dot" size={6} /></button>
                  <button aria-label="Scroll up"><Icon name="chevU" size={9} /></button>
                </ScrollTop>
              </ArrangeTop>
              <ArrangeMain>
                <TrackView>
                  <TrackList>
                    {Array.from({ length: 18 }, (_, i) => i + 1).map((n) => (
                      <Track key={n}>
                        <TrackHead $dim={n > 9}>
                          Track {n}
                          <Led type="radio" name={`track-${n}`} aria-label={`Track ${n} enabled`} defaultChecked />
                        </TrackHead>
                        <Activity $on={n === 6 || n === 7} />
                        <Lane>
                          {n === 6 && (
                            <Clip $head="linear-gradient(#3aa79b, #2c9088)" $fg="#b8ece4">
                              <h2><Icon name="clipWave" size={7} />drums 1</h2>
                              <DrumWave />
                            </Clip>
                          )}
                          {n === 7 && (
                            <Clip $head="linear-gradient(#665082, #55406f)" $fg="#ddd2e8">
                              <h2><Icon name="env" size={7} />PitchShifter - Insert 7 - Pitch</h2>
                            </Clip>
                          )}
                        </Lane>
                      </Track>
                    ))}
                  </TrackList>
                </TrackView>
                <Peaks><PeakMarks /></Peaks>
                <Scroll><button aria-label="Scroll down"><Icon name="chevD" size={9} /></button></Scroll>
              </ArrangeMain>
            </Arrange>
          </PlaylistBody>
        </Playlist>
      </Work>
    </Frame>
  );
}
